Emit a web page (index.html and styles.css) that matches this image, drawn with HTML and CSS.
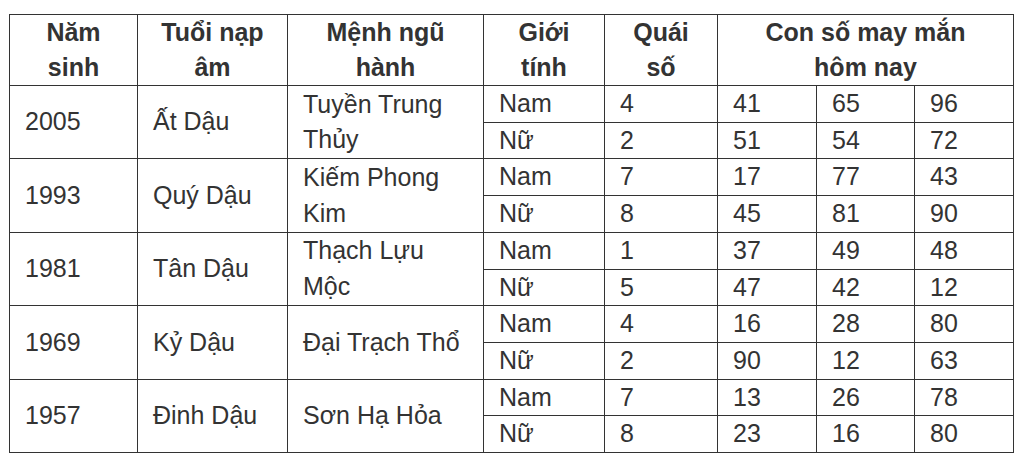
FILE: index.html
```html
<!DOCTYPE html>
<html lang="vi">
<head>
<meta charset="utf-8">
<title>Con số may mắn tuổi Dậu</title>
<link rel="stylesheet" href="styles.css">
</head>
<body>
<table class="luck">
  <colgroup>
    <col class="c-year"><col class="c-age"><col class="c-menh"><col class="c-sex"><col class="c-quai"><col class="c-num"><col class="c-num2"><col class="c-num">
  </colgroup>
  <thead>
    <tr>
      <th>Năm<br>sinh</th>
      <th>Tuổi nạp<br>âm</th>
      <th>Mệnh ngũ<br>hành</th>
      <th>Giới<br>tính</th>
      <th>Quái<br>số</th>
      <th colspan="3">Con số may mắn<br>hôm nay</th>
    </tr>
  </thead>
  <tbody>
    <tr><td rowspan="2">2005</td><td rowspan="2">Ất Dậu</td><td rowspan="2">Tuyền Trung<br>Thủy</td><td>Nam</td><td>4</td><td>41</td><td>65</td><td>96</td></tr>
    <tr><td>Nữ</td><td>2</td><td>51</td><td>54</td><td>72</td></tr>
    <tr><td rowspan="2">1993</td><td rowspan="2">Quý Dậu</td><td rowspan="2">Kiếm Phong<br>Kim</td><td>Nam</td><td>7</td><td>17</td><td>77</td><td>43</td></tr>
    <tr><td>Nữ</td><td>8</td><td>45</td><td>81</td><td>90</td></tr>
    <tr><td rowspan="2">1981</td><td rowspan="2">Tân Dậu</td><td rowspan="2">Thạch Lựu<br>Mộc</td><td>Nam</td><td>1</td><td>37</td><td>49</td><td>48</td></tr>
    <tr><td>Nữ</td><td>5</td><td>47</td><td>42</td><td>12</td></tr>
    <tr><td rowspan="2">1969</td><td rowspan="2">Kỷ Dậu</td><td rowspan="2">Đại Trạch Thổ</td><td>Nam</td><td>4</td><td>16</td><td>28</td><td>80</td></tr>
    <tr><td>Nữ</td><td>2</td><td>90</td><td>12</td><td>63</td></tr>
    <tr><td rowspan="2">1957</td><td rowspan="2">Đinh Dậu</td><td rowspan="2">Sơn Hạ Hỏa</td><td>Nam</td><td>7</td><td>13</td><td>26</td><td>78</td></tr>
    <tr><td>Nữ</td><td>8</td><td>23</td><td>16</td><td>80</td></tr>
  </tbody>
</table>
</body>
</html>
```

FILE: styles.css
```css
html, body {
  margin: 0;
  padding: 0;
  background: #ffffff;
}
body {
  padding: 14px 0 0 9px;
  font-family: "Liberation Sans", Arial, sans-serif;
  color: #333333;
}
.luck {
  border-collapse: collapse;
  table-layout: fixed;
  width: 1004px;
  font-size: 25px;
}
.c-year { width: 128px; }
.c-age { width: 150px; }
.c-menh { width: 196px; }
.c-sex { width: 121px; }
.c-quai { width: 113px; }
.c-num { width: 99px; }
.c-num2 { width: 98px; }
.luck th,
.luck td {
  border: 1px solid #333333;
  padding: 0 15px;
  vertical-align: middle;
}
.luck th {
  font-weight: bold;
  text-align: center;
  line-height: 35px;
  padding: 0 4px;
}
.luck td {
  text-align: left;
  line-height: 35.7px;
}
```
